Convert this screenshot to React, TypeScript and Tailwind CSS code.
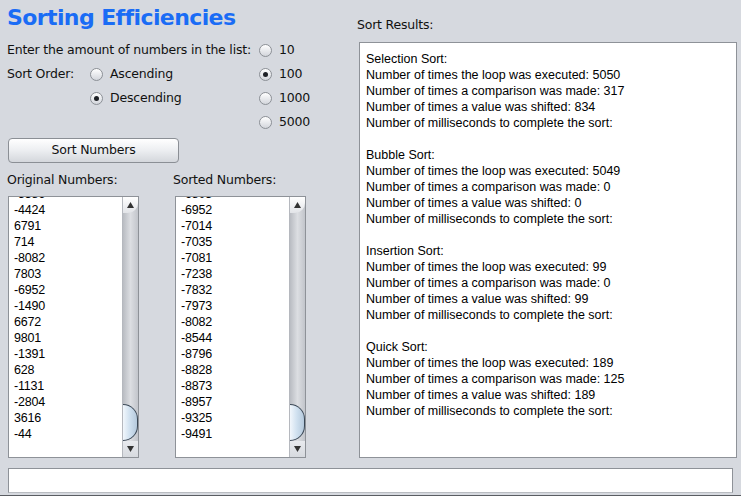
import React from 'react';

const original = ['-5386', '-4424', '6791', '714', '-8082', '7803', '-6952', '-1490', '6672', '9801', '-1391', '628', '-1131', '-2804', '3616', '-44'];
const sorted = ['-6803', '-6952', '-7014', '-7035', '-7081', '-7238', '-7832', '-7973', '-8082', '-8544', '-8796', '-8828', '-8873', '-8957', '-9325', '-9491'];

const results = [
  { name: 'Selection Sort:', loop: '5050', cmp: '317', shift: '834' },
  { name: 'Bubble Sort:', loop: '5049', cmp: '0', shift: '0' },
  { name: 'Insertion Sort:', loop: '99', cmp: '0', shift: '99' },
  { name: 'Quick Sort:', loop: '189', cmp: '125', shift: '189' },
];

const Radio = ({ label, checked }: { label: string; checked?: boolean }) => (
  <div className="flex items-center h-[24px]">
    <span className="w-[13px] h-[13px] rounded-full border border-[#8c9096] bg-gradient-to-b from-[#ffffff] to-[#d3d6dc] flex items-center justify-center">
      {checked && <span className="w-[5px] h-[5px] rounded-full bg-[#1e2126]" />}
    </span>
    <span className="ml-[7px]">{label}</span>
  </div>
);

const ScrollBar = () => (
  <div className="w-[16px] flex flex-col bg-gradient-to-r from-[#b9bcc2] via-[#dcdee2] to-[#c2c5cb] border-l border-[#b5b8be]">
    <div className="h-[16px] flex items-center justify-center bg-gradient-to-b from-[#ffffff] to-[#e2e4e8] rounded-br-[10px]">
      <svg width="7" height="6" viewBox="0 0 7 6"><path d="M3.5 0L7 6H0z" fill="#333" /></svg>
    </div>
    <div className="flex-1 flex flex-col justify-end">
      <div className="h-[37px] rounded-r-full border border-l-0 border-[#3b4856] bg-gradient-to-r from-[#f2f7fc] via-[#cfe0ef] to-[#b5c9dc]" />
    </div>
    <div className="h-[16px] flex items-center justify-center bg-gradient-to-b from-[#e8eaee] to-[#d7dadf]">
      <svg width="7" height="6" viewBox="0 0 7 6"><path d="M0 0H7L3.5 6z" fill="#333" /></svg>
    </div>
  </div>
);

const NumberList = ({ items }: { items: string[] }) => (
  <div className="w-[131px] h-[262px] flex border border-[#8e9298] bg-white">
    <div className="flex-1 overflow-hidden pl-[5px] font-['Liberation_Sans',Arial,sans-serif] text-[12.5px] text-black">
      <div className="-mt-[11px]">
        {items.map((n, i) => (
          <div key={i} className="h-[16px] leading-[16px]">{n}</div>
        ))}
      </div>
    </div>
    <ScrollBar />
  </div>
);

export default function App() {
  return (
    <div className="w-[741px] h-[496px] bg-[#d6d9df] flex flex-col font-['DejaVu_Sans',sans-serif] text-[12.5px] tracking-[-0.2px] text-[#111] overflow-hidden border-b border-[#5a5d62]">
      <div className="flex flex-1">
        <div className="w-[350px] flex flex-col">
          <div className="h-[38px] pl-[7px] pt-[4px] text-[22px] font-bold text-[#1a6cf5] leading-[28px] tracking-[-0.6px]">
            Sorting Efficiencies
          </div>
          <div className="flex">
            <div className="w-[259px] pl-[7px]">
              <div className="h-[24px] flex items-center">Enter the amount of numbers in the list:</div>
              <div className="flex">
                <div className="w-[83px] h-[24px] flex items-center">Sort Order:</div>
                <div className="flex flex-col">
                  <Radio label="Ascending" />
                  <Radio label="Descending" checked />
                </div>
              </div>
            </div>
            <div className="flex flex-col">
              <Radio label="10" />
              <Radio label="100" checked />
              <Radio label="1000" />
              <Radio label="5000" />
            </div>
          </div>
          <div className="pl-[8px] mt-[4px]">
            <button className="w-[171px] h-[25px] rounded-[4px] border border-[#8b8f95] bg-gradient-to-b from-[#ffffff] via-[#eceef1] to-[#d4d7dc] text-[12.5px] tracking-[-0.2px]">
              Sort Numbers
            </button>
          </div>
          <div className="flex pl-[7px] mt-[5px] h-[24px] items-center">
            <div className="w-[166px]">Original Numbers:</div>
            <div>Sorted Numbers:</div>
          </div>
          <div className="flex pl-[8px] mt-[4px] gap-[36px]">
            <NumberList items={original} />
            <NumberList items={sorted} />
          </div>
        </div>
        <div className="flex-1 flex flex-col pl-[7px] pr-[4px]">
          <div className="h-[42px] pt-[13px] leading-[24px] flex items-start">Sort Results:</div>
          <div className="ml-[2px] w-[378px] h-[416px] border border-[#8e9298] bg-white pl-[6px] pt-[8px] font-['Liberation_Sans',Arial,sans-serif] text-[12.5px] tracking-normal text-black">
            {results.map((r, i) => (
              <div key={i} className="mb-[16px]">
                <div className="h-[16px] leading-[16px]">{r.name}</div>
                <div className="h-[16px] leading-[16px]">Number of times the loop was executed: {r.loop}</div>
                <div className="h-[16px] leading-[16px]">Number of times a comparison was made: {r.cmp}</div>
                <div className="h-[16px] leading-[16px]">Number of times a value was shifted: {r.shift}</div>
                <div className="h-[16px] leading-[16px]">Number of milliseconds to complete the sort:</div>
              </div>
            ))}
          </div>
        </div>
      </div>
      <div className="px-[8px] pb-[3px] pt-[10px]">
        <div className="h-[25px] border border-[#8e9298] border-b-[#b9bcc1] bg-white" />
      </div>
    </div>
  );
}
